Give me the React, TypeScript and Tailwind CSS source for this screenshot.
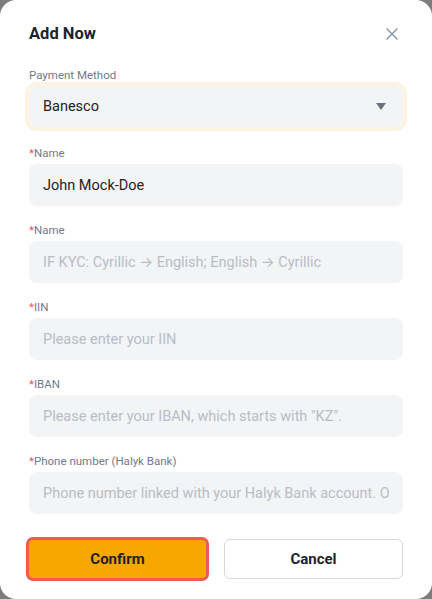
import React from "react";

function Label({ text, required = true }: { text: string; required?: boolean }) {
  return (
    <div className="text-[11.5px] leading-[14px] text-[#707a8a] h-[14px] whitespace-nowrap">
      {required && <span className="text-[#f6465d]">*</span>}
      {text}
    </div>
  );
}

function Field({ value, placeholder }: { value?: string; placeholder?: React.ReactNode }) {
  return (
    <div className="h-[42px] rounded-[8px] bg-[#f3f4f6] flex items-center px-[14px]">
      <div className="flex-1 overflow-hidden whitespace-nowrap">
        {value ? (
          <span className="text-[14.5px] text-[#1e2329]">{value}</span>
        ) : (
          <span className="text-[14.5px] text-[#b7bdc6]">{placeholder}</span>
        )}
      </div>
    </div>
  );
}

function Group({ label, value, placeholder }: { label: string; value?: string; placeholder?: React.ReactNode }) {
  return (
    <div className="flex flex-col gap-[4px]">
      <Label text={label} />
      <Field value={value} placeholder={placeholder} />
    </div>
  );
}

const Arrow = () => <span style={{ fontFamily: "Inter, 'DejaVu Sans', sans-serif" }}>→</span>;

export default function App() {
  return (
    <div className="w-[432px] h-[599px] bg-[#7d7d7d]" style={{ fontFamily: "Roboto, 'Noto Sans', sans-serif" }}>
      <div className="w-[432px] h-[599px] bg-white rounded-[16px] flex flex-col px-[29px]">
        <div className="flex items-center justify-between pt-[22px] h-[46px]">
          <div className="text-[16.5px] leading-[24px] font-bold text-[#1e2329]">Add Now</div>
          <svg width="12" height="12" viewBox="0 0 12 12" className="mr-[5px] -mt-[1px]">
            <path d="M1 1L11 11M11 1L1 11" stroke="#848e9c" strokeWidth="1.4" strokeLinecap="round" />
          </svg>
        </div>
        <div className="mt-[22px]">
          <Label text="Payment Method" required={false} />
        </div>
        <div className="-mx-[4px] rounded-[12px] border-[4px] border-[#fdf3e1]">
          <div className="h-[41px] rounded-[8px] bg-[#f3f4f6] flex items-center justify-between px-[14px]">
            <span className="text-[14.5px] text-[#1e2329]">Banesco</span>
            <svg width="10" height="7" viewBox="0 0 10 7" className="mr-[3px]">
              <path d="M0 0H10L5 7Z" fill="#6b7280" />
            </svg>
          </div>
        </div>
        <div className="mt-[15px] flex flex-col gap-[17px]">
          <Group label="Name" value="John Mock-Doe" />
          <Group
            label="Name"
            placeholder={
              <>
                IF KYC: Cyrillic <Arrow /> English; English <Arrow /> Cyrillic
              </>
            }
          />
          <Group label="IIN" placeholder="Please enter your IIN" />
          <Group label="IBAN" placeholder={'Please enter your IBAN, which starts with "KZ".'} />
          <Group label="Phone number (Halyk Bank)" placeholder="Phone number linked with your Halyk Bank account. Only numbers" />
        </div>
        <div className="mt-[23px] flex items-center gap-[15px]">
          <div className="-ml-[3px] w-[183px] h-[44px] rounded-[7px] border-[3px] border-[#ef5a56] bg-[#f6a700] flex items-center justify-center">
            <span className="text-[15px] font-bold text-[#1e2329]">Confirm</span>
          </div>
          <div className="flex-1 h-[40px] rounded-[6px] border border-[#d5d9e0] bg-white flex items-center justify-center">
            <span className="text-[15px] font-bold text-[#1e2329]">Cancel</span>
          </div>
        </div>
      </div>
    </div>
  );
}
